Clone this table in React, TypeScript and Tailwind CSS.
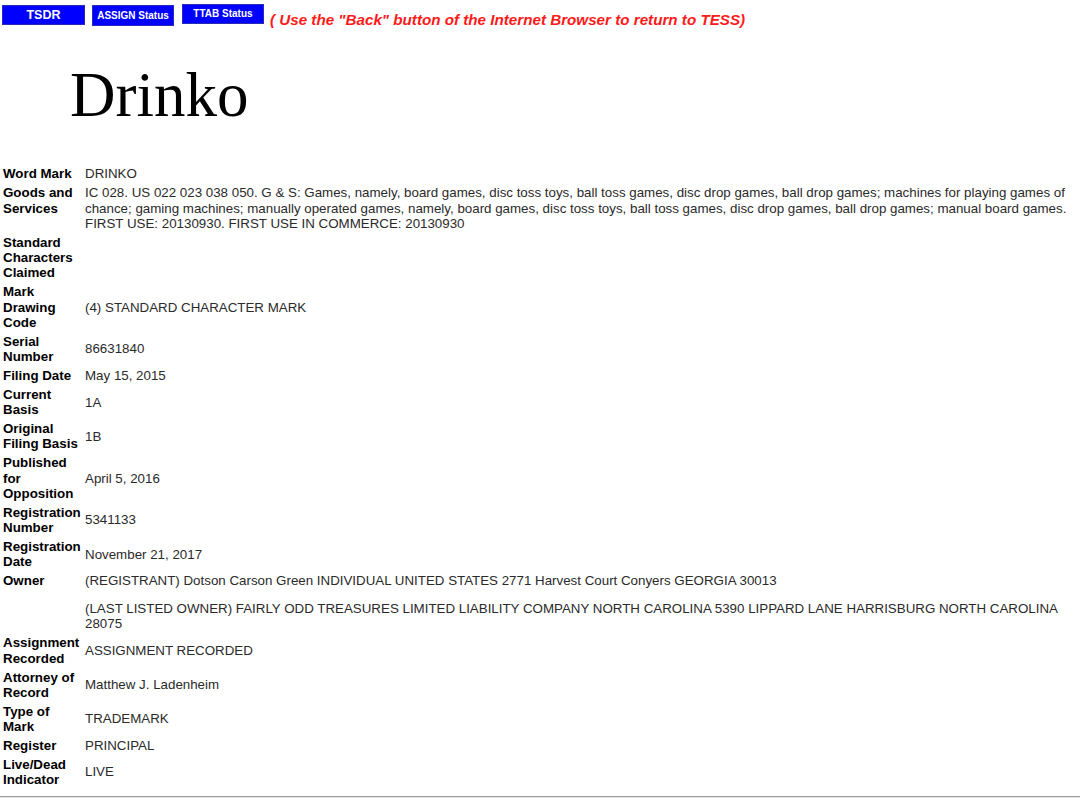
import React from 'react';

type Row = { label: string; value: React.ReactNode };

const ROWS: Row[] = [
  { label: 'Word Mark', value: 'DRINKO' },
  {
    label: 'Goods and Services',
    value:
      'IC 028. US 022 023 038 050. G & S: Games, namely, board games, disc toss toys, ball toss games, disc drop games, ball drop games; machines for playing games of chance; gaming machines; manually operated games, namely, board games, disc toss toys, ball toss games, disc drop games, ball drop games; manual board games. FIRST USE: 20130930. FIRST USE IN COMMERCE: 20130930',
  },
  { label: 'Standard Characters Claimed', value: '' },
  { label: 'Mark Drawing Code', value: '(4) STANDARD CHARACTER MARK' },
  { label: 'Serial Number', value: '86631840' },
  { label: 'Filing Date', value: 'May 15, 2015' },
  { label: 'Current Basis', value: '1A' },
  { label: 'Original Filing Basis', value: '1B' },
  { label: 'Published for Opposition', value: 'April 5, 2016' },
  { label: 'Registration Number', value: '5341133' },
  { label: 'Registration Date', value: 'November 21, 2017' },
  {
    label: 'Owner',
    value: (
      <>
        <div>(REGISTRANT) Dotson Carson Green INDIVIDUAL UNITED STATES 2771 Harvest Court Conyers GEORGIA 30013</div>
        <div className="mt-[12.7px]">
          (LAST LISTED OWNER) FAIRLY ODD TREASURES LIMITED LIABILITY COMPANY NORTH CAROLINA 5390 LIPPARD LANE HARRISBURG NORTH CAROLINA 28075
        </div>
      </>
    ),
  },
  { label: 'Assignment Recorded', value: 'ASSIGNMENT RECORDED' },
  { label: 'Attorney of Record', value: 'Matthew J. Ladenheim' },
  { label: 'Type of Mark', value: 'TRADEMARK' },
  { label: 'Register', value: 'PRINCIPAL' },
  { label: 'Live/Dead Indicator', value: 'LIVE' },
];

export default function App() {
  return (
    <div className="w-[1080px] h-[801px] bg-white overflow-hidden font-['Liberation_Sans',Arial,sans-serif]">
      {/* top buttons */}
      <div className="flex items-start pt-[4px] pl-[2px]">
        <div className="mt-[1px] w-[83px] h-[20px] bg-[#0000ff] border border-[#2a2ab8] flex items-center justify-center text-white font-bold text-[12.5px] leading-none">
          TSDR
        </div>
        <div className="ml-[7px] mt-[1px] w-[82px] h-[21px] bg-[#0000ff] border border-[#2a2ab8] flex items-center justify-center text-white font-bold text-[10px] leading-none">
          ASSIGN Status
        </div>
        <div className="ml-[8px] w-[82px] h-[20px] bg-[#0000ff] border border-[#2a2ab8] flex items-center justify-center text-white font-bold text-[10px] leading-none">
          TTAB Status
        </div>
        <div className="ml-[6px] mt-[7px] text-[15.2px] leading-[17px] font-bold italic text-[#ff1a1a] whitespace-nowrap">
          ( Use the "Back" button of the Internet Browser to return to TESS)
        </div>
      </div>

      {/* mark */}
      <div className="mt-[36px] pl-[70px] h-[64px] text-[63px] leading-none text-black font-['Liberation_Serif','Times_New_Roman',serif]">
        Drinko
      </div>

      {/* details */}
      <div className="mt-[36.7px] pl-[3px] w-[1070px] text-[13.33px] leading-[15.3px]">
        {ROWS.map((row) => (
          <div key={row.label} className="grid grid-cols-[78px_1fr] gap-x-[4px] py-[1.8px]">
            <div className="self-start font-bold text-black">{row.label}</div>
            <div className="self-center text-[#2a2a2a]">{row.value}</div>
          </div>
        ))}
      </div>

      <div className="mt-[7px] border-t border-t-[#9a9a9a] border-b border-b-[#e4e4e4] h-[2px]" />
    </div>
  );
}
